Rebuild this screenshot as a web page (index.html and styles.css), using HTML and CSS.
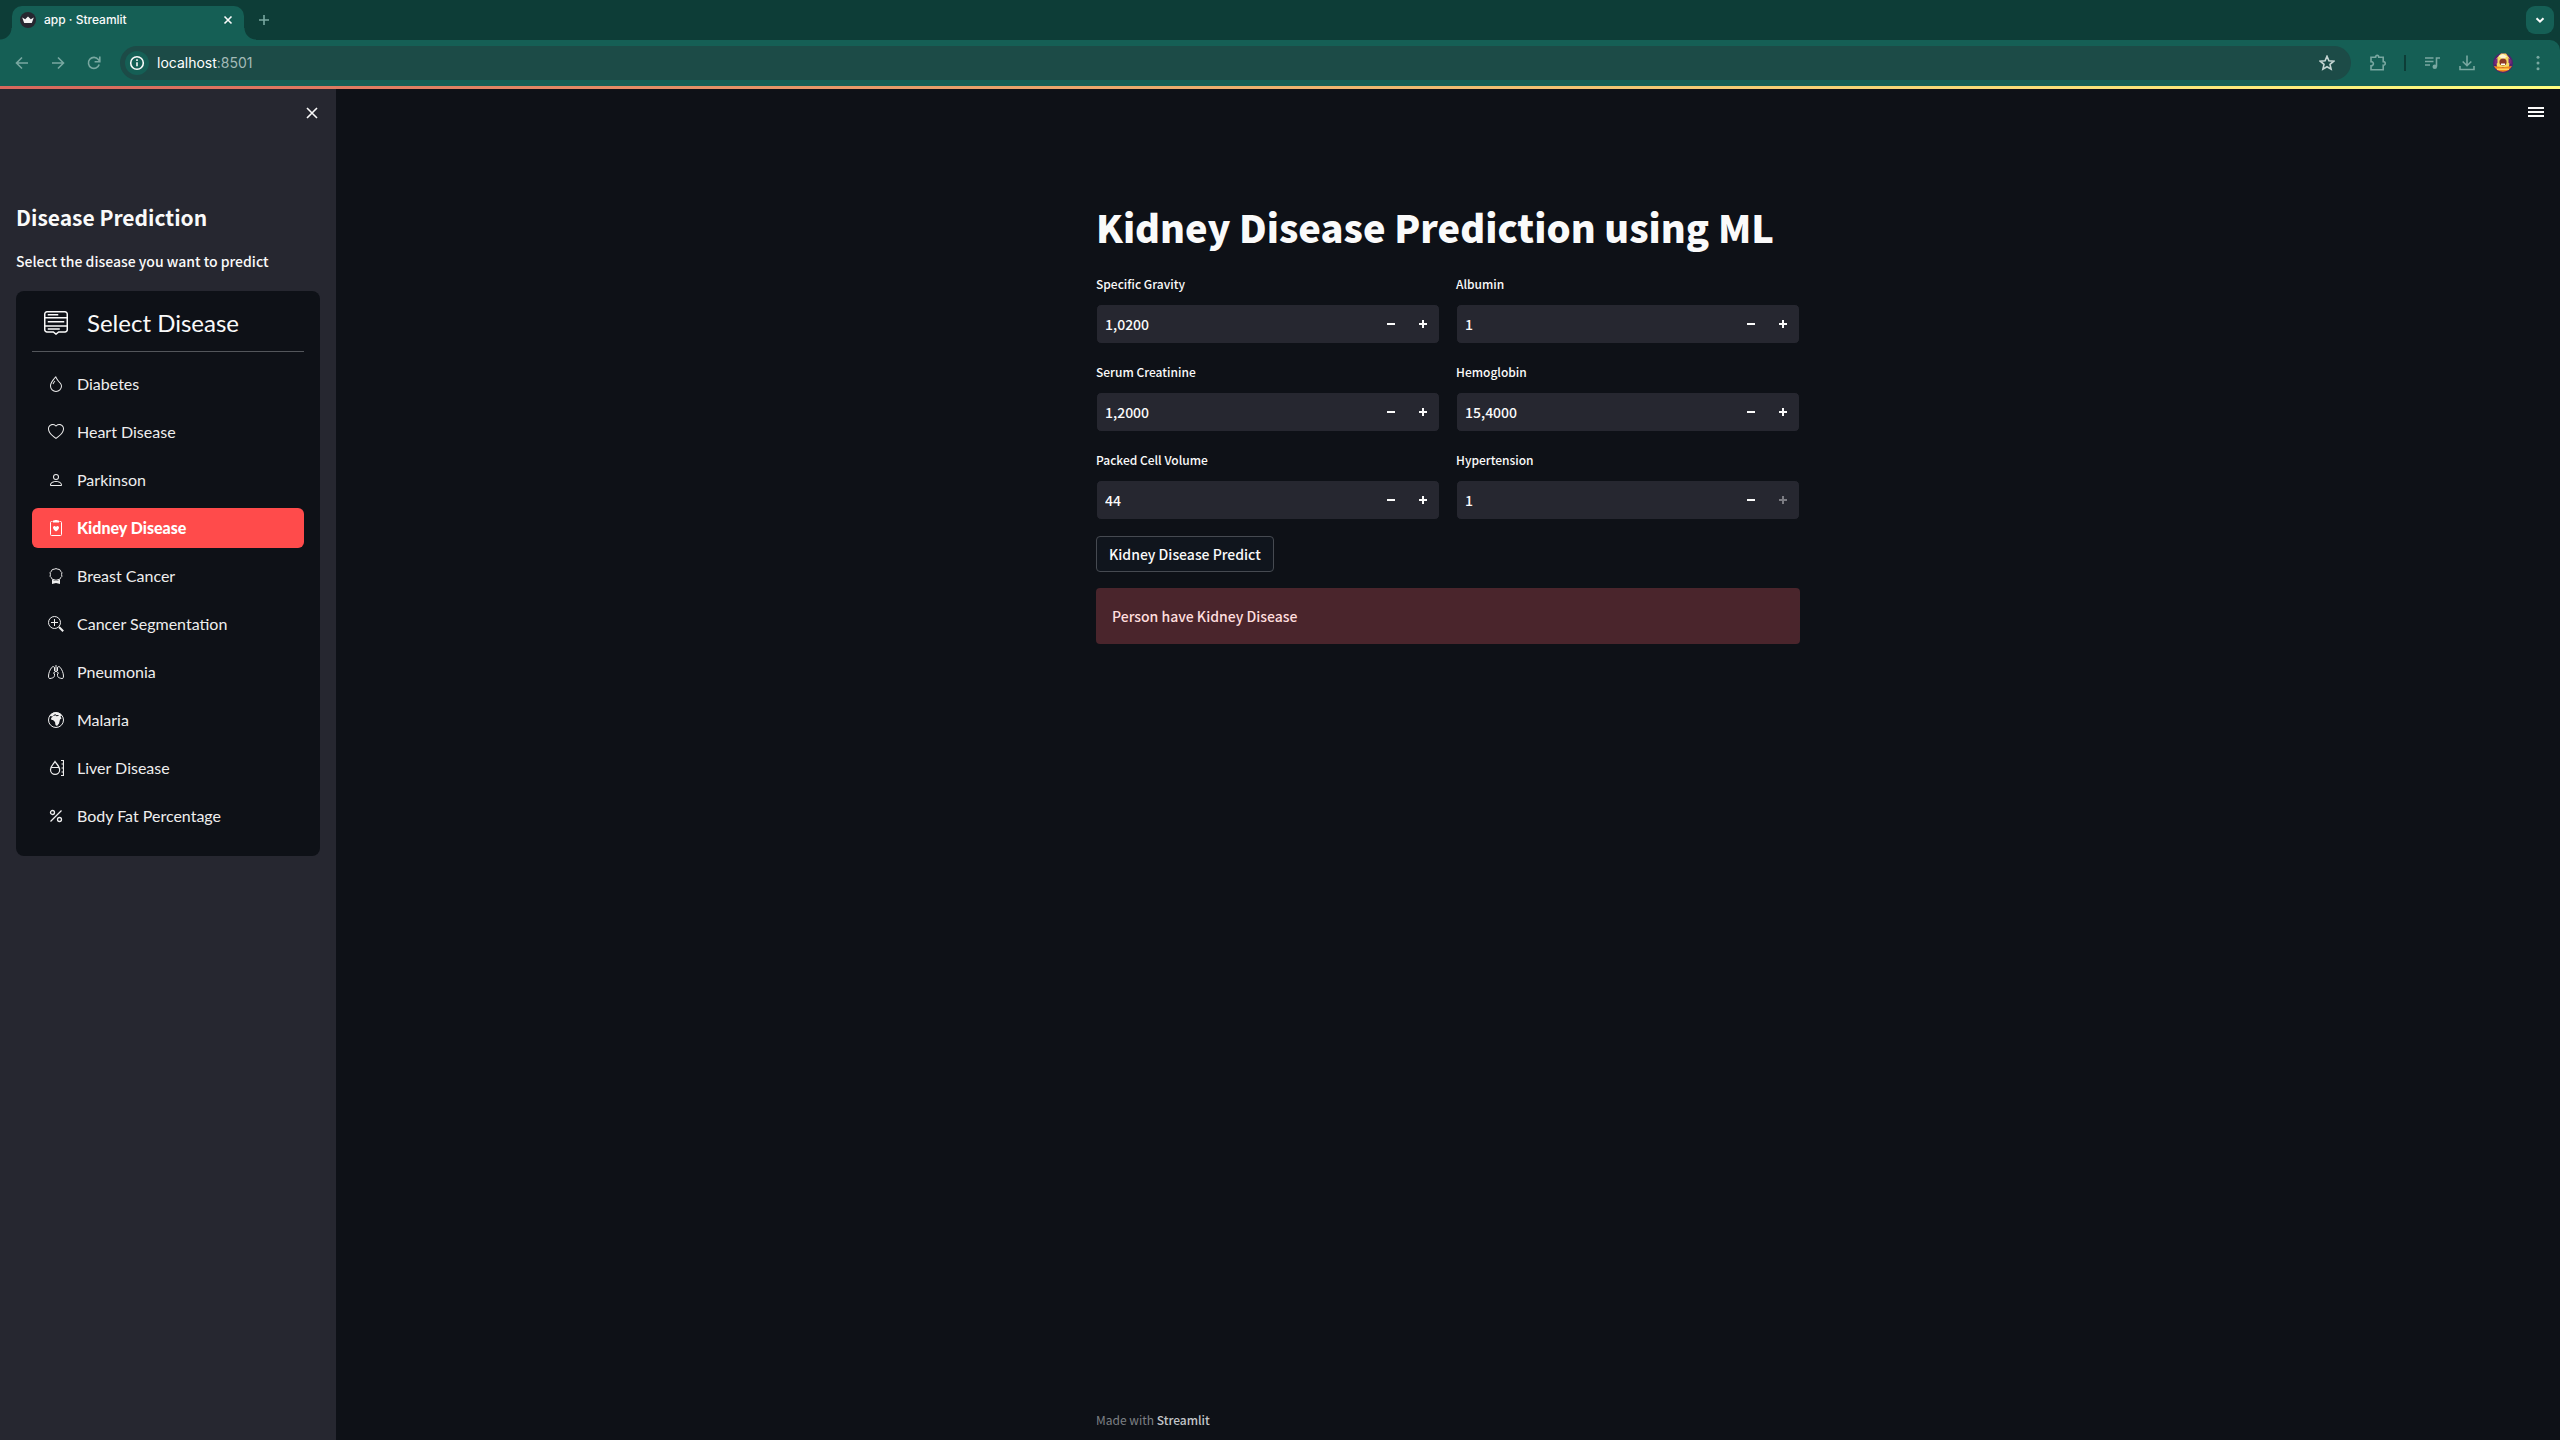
FILE: index.html
```html
<!DOCTYPE html>
<html lang="en">
<head>
<meta charset="utf-8">
<title>app · Streamlit</title>
<link rel="stylesheet" href="styles.css">
</head>
<body>
<header class="browser">
  <div class="tabstrip">
    <div class="tab">
      <svg class="favicon" viewBox="0 0 16 16"><circle cx="8" cy="8" r="8" fill="#262730"/><path d="M2.2 5.4l3 1.8L8 4.4l2.8 2.8 3-1.8-2 5.6H4.200z" fill="#f4f4f4"/></svg>
      <span class="tab-title">app · Streamlit</span>
      <button class="chrome-btn tab-close" aria-label="Close tab"><svg viewBox="0 0 16 16" class="i16"><path d="M4.500 4.500l7 7m0-7l-7 7" class="line"/></svg></button>
    </div>
    <button class="chrome-btn new-tab dim" aria-label="New tab"><svg viewBox="0 0 16 16" class="i16"><path d="M8 3v10M3 8h10" class="line"/></svg></button>
    <button class="chrome-btn tab-search" aria-label="Search tabs"><svg viewBox="0 0 16 16" class="i16"><path d="M4.500 6.200L8 9.700l3.500-3.500" class="line heavy"/></svg></button>
  </div>
  <div class="toolbar">
    <nav class="nav-buttons dim">
      <button class="chrome-btn" aria-label="Back"><svg viewBox="0 0 16 16" class="i16"><path d="M14 8H3M8 2.500L2.500 8 8 13.500" class="line"/></svg></button>
      <button class="chrome-btn" aria-label="Forward"><svg viewBox="0 0 16 16" class="i16"><path d="M2 8h11M8 2.500L13.500 8 8 13.500" class="line"/></svg></button>
      <button class="chrome-btn" aria-label="Reload"><svg viewBox="0 0 16 16" class="i16"><path d="M13.200 9.500A5.500 5.500 0 1 1 12.300 4.500L13.500 6" class="line"/><path d="M13.800 1.500v5.200H8.600" class="line"/></svg></button>
    </nav>
    <div class="omnibox">
      <button class="chrome-btn site-info" aria-label="Site information"><svg viewBox="0 0 16 16" class="i16"><circle cx="8" cy="8" r="6.300" class="line"/><path d="M8 7.200v4M8 4.300v1.600" class="line"/></svg></button>
      <div class="url" role="textbox" aria-label="Address" contenteditable="true" spellcheck="false"><span class="host">localhost</span>:8501</div>
      <button class="chrome-btn star" aria-label="Bookmark"><svg viewBox="0 0 16 16" class="i16"><path d="M8 1.300l1.900 4.500 4.800.4-3.700 3.200 1.100 4.800L8 11.700l-4.100 2.500L5 9.400 1.300 6.200l4.800-.4z" class="line"/></svg></button>
    </div>
    <div class="actions dim">
      <button class="chrome-btn" aria-label="Extensions"><svg viewBox="0 0 18 18" class="i18"><path d="M2 3.200h4.600C6.400.8 10 .8 9.800 3.200h4.400v4.400c2.700-.2 2.700 3.800 0 3.600v4.600H2v-4c3.200.1 3.200-4.200 0-4.200z" class="line"/></svg></button>
      <span class="divider"></span>
      <button class="chrome-btn" aria-label="Media"><svg viewBox="0 0 18 18" class="i18"><path d="M2 4h8.500M2 7.500h8.500M2 11h5M13.500 12.500V4H17" class="line"/><circle cx="11.800" cy="12.700" r="2.300" fill="currentColor"/></svg></button>
      <button class="chrome-btn" aria-label="Downloads"><svg viewBox="0 0 18 18" class="i18"><path d="M9 1.500v10M4.700 7.500L9 11.700l4.300-4.200M2 12v3.500h14V12" class="line"/></svg></button>
      <button class="chrome-btn" aria-label="Profile"><svg viewBox="0 0 20 20" class="i20"><circle cx="10" cy="10" r="10" fill="#51206f"/><path d="M3 6L8 .5h5L17 6l-1 8H4z" fill="#f7dc62"/><path d="M5.500 3l4.500-2 4 2.500-4 3z" fill="#fff4cf"/><circle cx="10" cy="9" r="3.600" fill="#8d3926"/><path d="M8 10.500h4v1.500H8z" fill="#fff"/><path d="M.9 13l9 1.300 9-1.300A10 10 0 0 1 .9 13z" fill="#f08a1d"/><path d="M4 15.500h12v1.500H4z" fill="#ffd45e"/><path d="M1.500 7l3-2v5l-3 2zM15.500 5l3 2v4l-3-1z" fill="#7a2a7a"/></svg></button>
      <button class="chrome-btn" aria-label="Menu"><svg viewBox="0 0 16 16" class="i16" fill="currentColor"><circle cx="8" cy="2.300" r="1.500"/><circle cx="8" cy="8" r="1.500"/><circle cx="8" cy="13.700" r="1.500"/></svg></button>
    </div>
  </div>
</header>
<div class="decoration"></div>
<div class="app">
  <aside class="sidebar">
    <button class="sidebar-close" aria-label="Close sidebar"><svg viewBox="0 0 16 16" class="i16"><path d="M3 3l10 10M13 3L3 13" class="line"/></svg></button>
    <h2 class="sidebar-title">Disease Prediction</h2>
    <p class="sidebar-text">Select the disease you want to predict</p>
    <div class="menu">
      <div class="menu-header">
        <svg viewBox="0 0 16 16" class="i24" fill="none" stroke="currentColor"><path d="M2 .5h12A1.500 1.500 0 0 1 15.500 2v10.500A1.500 1.500 0 0 1 14 14H9.800L8 15.400 6.200 14H2A1.500 1.500 0 0 1 .5 12.500V2A1.500 1.500 0 0 1 2 .5zM.5 4.500h15M.5 10h15M2.500 2.500h7M2.500 7.200h11M2.500 12h8"/></svg>
        <span>Select Disease</span>
      </div>
      <nav class="menu-list">
        <a class="item" href="#"><svg viewBox="0 0 16 16" class="i16" fill="currentColor"><path fill-rule="evenodd" d="M7.210.8C7.690.295 8 0 8 0c.109.363.234.708.371 1.038.812 1.946 2.073 3.350 3.197 4.600C12.878 7.096 14 8.345 14 10a6 6 0 0 1-12 0C2 6.668 5.580 2.517 7.210.8zm.413 1.021A31.250 31.250 0 0 0 5.794 3.990c-.726.95-1.436 2.008-1.960 3.070C3.304 8.133 3 9.138 3 10a5 5 0 0 0 10 0c0-1.201-.796-2.157-2.181-3.700l-.03-.032C9.750 5.110 8.500 3.720 7.623 1.820z"/><path d="M4.553 7.776c.82-1.641 1.717-2.753 2.093-3.130l.708.708c-.29.29-1.128 1.311-1.907 2.870z"/></svg>Diabetes</a>
        <a class="item" href="#"><svg viewBox="0 0 16 16" class="i16" fill="currentColor"><path d="m8 2.748-.717-.737C5.600.281 2.514.878 1.400 3.053c-.523 1.023-.641 2.500.314 4.385.92 1.815 2.834 3.989 6.286 6.357 3.452-2.368 5.365-4.542 6.286-6.357.955-1.886.838-3.362.314-4.385C13.486.878 10.400.28 8.717 2.010L8 2.748zM8 15C-7.333 4.868 3.279-3.040 7.824 1.143c.06.055.119.112.176.171a3.120 3.120 0 0 1 .176-.17C12.720-3.042 23.333 4.867 8 15z"/></svg>Heart Disease</a>
        <a class="item" href="#"><svg viewBox="0 0 16 16" class="i16" fill="currentColor"><path d="M8 8a3 3 0 1 0 0-6 3 3 0 0 0 0 6zm2-3a2 2 0 1 1-4 0 2 2 0 0 1 4 0zm4 8c0 1-1 1-1 1H3s-1 0-1-1 1-4 6-4 6 3 6 4zm-1-.004c-.001-.246-.154-.986-.832-1.664C11.516 10.680 10.289 10 8 10c-2.290 0-3.516.68-4.168 1.332-.678.678-.83 1.418-.832 1.664h10z"/></svg>Parkinson</a>
        <a class="item active" href="#" aria-current="page"><svg viewBox="0 0 16 16" class="i16"><path d="M4.500 1.500h-1a1 1 0 0 0-1 1v12a1 1 0 0 0 1 1h9a1 1 0 0 0 1-1v-12a1 1 0 0 0-1-1h-1" fill="none" stroke="currentColor"/><path d="M6.500 0h3v.5H11v2H5v-2h1.500zM8 6.900c1.300-1.600 3-.6 3 .9C11 9.300 9 10.800 8 11.500 7 10.800 5 9.300 5 7.800 5 6.300 6.700 5.300 8 6.900z" fill="currentColor"/></svg>Kidney Disease</a>
        <a class="item" href="#"><svg viewBox="0 0 16 16" class="i16" fill="none" stroke="currentColor"><path d="M6.200 1.200L8 .6l1.800.6 1.900.3.900 1.700 1.300 1.400-.3 1.900.3 1.900-1.300 1.300-.9 1.700-1.900.3L8 12.300l-1.800-.6-1.900-.3-.9-1.700-1.300-1.300.3-1.900-.3-1.900 1.300-1.400.9-1.700z"/><path d="M4 11.800V16l4-1 4 1v-4.200L8 13z" fill="currentColor" stroke="none"/></svg>Breast Cancer</a>
        <a class="item" href="#"><svg viewBox="0 0 16 16" class="i16" fill="none" stroke="currentColor"><circle cx="6.500" cy="6.500" r="6"/><path d="M6.500 3v7M3 6.500h7"/><path d="M11 11l4.200 4.200" stroke-width="2"/></svg>Cancer Segmentation</a>
        <a class="item" href="#"><svg viewBox="0 0 16 16" class="i16" fill="none" stroke="currentColor"><path d="M8 1v6.500M8 7L5 9.500M8 7l3 2.500M6.500 7V4c0-1.800-1.700-1.800-2.600-.7C2 5.500.6 9 .5 12c0 2.500.8 2.900 2.800 2.300 2.200-.6 3.200-1.300 3.200-3V9.500M9.500 7V4c0-1.800 1.700-1.800 2.600-.7 1.900 2.200 3.300 5.700 3.400 8.700 0 2.500-.8 2.900-2.800 2.300-2.200-.6-3.200-1.300-3.200-3V9.500"/></svg>Pneumonia</a>
        <a class="item" href="#"><svg viewBox="0 0 16 16" class="i16"><circle cx="8" cy="8" r="7.500" fill="none" stroke="currentColor"/><path d="M1.500 4C4-1 11-1 14 3.500L12.500 4l1 2.500-1.500 1-1 4-2 2.500-1.500-1-.5-3-2-2H3.500L3 6l2-1.500z" fill="currentColor"/><path d="M5.500 3.500l2-.8.5 1 2.500-.2" fill="none" stroke="#0e1117"/></svg>Malaria</a>
        <a class="item" href="#"><svg viewBox="0 0 16 16" class="i16" fill="none" stroke="currentColor"><path d="M7 1.500c-1.200 2.200-4.500 4.800-4.500 8.200a4.600 4.600 0 0 0 9.200 0C11.700 6.300 8.200 3.700 7 1.500zM3 7.500h8.400M13 .5h2.500v15H13M13.500 4h2M13.500 8h2M13.500 12h2" stroke-width="1.200"/></svg>Liver Disease</a>
        <a class="item" href="#"><svg viewBox="0 0 16 16" class="i16" fill="none" stroke="currentColor" stroke-width="1.300"><path d="M13.500 2.500l-11 11"/><circle cx="4.500" cy="4.500" r="2"/><circle cx="11.500" cy="11.500" r="2"/></svg>Body Fat Percentage</a>
      </nav>
    </div>
  </aside>
  <main class="main">
    <button class="main-menu" aria-label="Main menu"><svg viewBox="0 0 16 16" class="i16"><path d="M0 4h16M0 8h16M0 12h16" class="line heavy"/></svg></button>
    <form class="block" onsubmit="return false">
      <h1>Kidney Disease Prediction using ML</h1>
      <div class="fields">
        <div class="field"><label for="sg">Specific Gravity</label><div class="number"><input id="sg" type="text" inputmode="decimal" value="1,0200"><button type="button" class="minus" aria-label="Decrease"></button><button type="button" class="plus" aria-label="Increase"></button></div></div>
        <div class="field"><label for="al">Albumin</label><div class="number"><input id="al" type="text" inputmode="decimal" value="1"><button type="button" class="minus" aria-label="Decrease"></button><button type="button" class="plus" aria-label="Increase"></button></div></div>
        <div class="field"><label for="sc">Serum Creatinine</label><div class="number"><input id="sc" type="text" inputmode="decimal" value="1,2000"><button type="button" class="minus" aria-label="Decrease"></button><button type="button" class="plus" aria-label="Increase"></button></div></div>
        <div class="field"><label for="he">Hemoglobin</label><div class="number"><input id="he" type="text" inputmode="decimal" value="15,4000"><button type="button" class="minus" aria-label="Decrease"></button><button type="button" class="plus" aria-label="Increase"></button></div></div>
        <div class="field"><label for="pcv">Packed Cell Volume</label><div class="number"><input id="pcv" type="text" inputmode="decimal" value="44"><button type="button" class="minus" aria-label="Decrease"></button><button type="button" class="plus" aria-label="Increase"></button></div></div>
        <div class="field"><label for="ht">Hypertension</label><div class="number"><input id="ht" type="text" inputmode="decimal" value="1"><button type="button" class="minus" aria-label="Decrease"></button><button type="button" class="plus" aria-label="Increase" disabled></button></div></div>
      </div>
      <button class="predict" type="submit">Kidney Disease Predict</button>
      <div class="alert" role="alert">Person have Kidney Disease</div>
    </form>
    <footer class="footer">Made with <a href="#">Streamlit</a></footer>
  </main>
</div>
</body>
</html>
```
FILE: styles.css
```css
* { box-sizing: border-box; }
body {
  margin: 0;
  min-height: 100vh;
  display: flex;
  flex-direction: column;
  background: #0e1117;
  color: #fafafa;
  font-family: "Noto Sans CJK SC", sans-serif;
  font-size: 14px;
  font-weight: 500;
  line-height: 24px;
}
button, input { font: inherit; color: inherit; }
button { background: none; border: 0; padding: 0; cursor: pointer; }
a { color: inherit; text-decoration: none; }
svg { display: block; flex: none; }
.i16 { width: 16px; height: 16px; }
.i18 { width: 18px; height: 18px; }
.i20 { width: 20px; height: 20px; }
.i24 { width: 24px; height: 24px; }
.line { fill: none; stroke: currentColor; stroke-width: 1.6; }
.heavy { stroke-width: 2; }

/* Browser window */
.browser { background: #0d3d37; font-family: Inter, sans-serif; }
.tabstrip { display: flex; align-items: flex-end; height: 40px; padding: 0 6px 0 12px; }
.tab {
  position: relative;
  display: flex;
  align-items: center;
  width: 232px;
  height: 34px;
  padding: 0 8px 6px;
  border-radius: 10px 10px 0 0;
  background: #155f55;
  font-size: 12px;
}
.tab::before, .tab::after {
  content: "";
  position: absolute;
  bottom: 0;
  width: 12px;
  height: 12px;
}
.tab::before { left: -12px; background: radial-gradient(circle at 0 0, transparent 11px, #155f55 12px); }
.tab::after { right: -12px; background: radial-gradient(circle at 100% 0, transparent 11px, #155f55 12px); }
.favicon { width: 16px; height: 16px; }
.tab-title { margin-left: 8px; flex: 1; }
.chrome-btn { display: flex; align-items: center; justify-content: center; }
.new-tab { margin: 0 auto 12px 12px; }
.tab-search { width: 28px; height: 28px; margin-bottom: 6px; border-radius: 9px; background: #155f55; }
.dim { color: #79a8a1; }
.toolbar {
  display: flex;
  align-items: center;
  height: 46px;
  padding: 0 14px;
  background: #155f55;
  border-radius: 0 10px 0 0;
}
.nav-buttons { display: flex; gap: 20px; }
.omnibox {
  flex: 1;
  display: flex;
  align-items: center;
  height: 34px;
  margin: 0 18px;
  padding: 0 16px 0 5px;
  border-radius: 17px;
  background: #1c4b47;
}
.site-info { width: 24px; height: 24px; border-radius: 50%; background: #155f55; }
.url { flex: 1; margin-left: 8px; font-size: 14px; font-weight: 400; color: #a3bab7; outline: 0; }
.host { color: #fff; }
.star { color: #c5d5d3; }
.actions { display: flex; align-items: center; gap: 17px; }
.divider { width: 2px; height: 16px; background: #0d3d37; }
.decoration { height: 3px; background: linear-gradient(90deg, #d8675c, #fffd80); }

/* Sidebar */
.app { flex: 1; display: flex; }
.sidebar { width: 336px; flex: none; padding: 16px; background: #262730; }
.sidebar-close { display: block; margin-left: auto; }
.sidebar-title { margin: 80px 0 0; font-size: 21px; font-weight: 700; line-height: 32px; }
.sidebar-text { margin: 16px 0 18px; }
.menu {
  padding: 16px;
  border-radius: 8px;
  background: #0e1117;
  font-family: Lato, sans-serif;
  font-size: 16px;
  font-weight: 400;
}
.menu-header {
  display: flex;
  align-items: center;
  gap: 19px;
  height: 45px;
  padding: 0 12px 12px;
  border-bottom: 1px solid #53565b;
  font-size: 24px;
}
.menu-list { display: flex; flex-direction: column; gap: 8px; padding: 12px 0 4px; }
.item { display: flex; align-items: center; gap: 13px; height: 40px; padding: 0 16px; border-radius: 6px; color: #eeeeee; }
.item.active { background: #ff4b4b; color: #fff; font-weight: 900; }

/* Main area */
.main { flex: 1; display: flex; flex-direction: column; align-items: center; padding: 15px 16px 8px; }
.main-menu { align-self: flex-end; }
.block { width: 100%; max-width: 704px; margin-top: 75px; }
h1 { margin: 0; font-size: 38px; font-weight: 900; line-height: 64px; white-space: nowrap; }
.fields { display: grid; grid-template-columns: 1fr 1fr; gap: 16px; margin-top: 13px; }
.field { display: flex; flex-direction: column; justify-content: space-between; height: 72px; }
.field label { align-self: flex-start; font-size: 12px; }
.number {
  display: flex;
  height: 40px;
  border: 1px solid #0e1117;
  border-radius: 5px;
  background: #262730;
}
.number input { flex: 1; min-width: 0; padding: 0 8px; border: 0; outline: 0; background: none; }
.minus, .plus {
  width: 32px;
  background: linear-gradient(currentColor, currentColor) center / 8px 2px no-repeat;
}
.plus {
  background:
    linear-gradient(currentColor, currentColor) center / 8px 2px no-repeat,
    linear-gradient(currentColor, currentColor) center / 2px 8px no-repeat;
}
.plus:disabled { color: #7b7b82; }
.predict {
  display: block;
  height: 36px;
  margin-top: 16px;
  padding: 0 12px;
  border: 1px solid #464a51;
  border-radius: 4px;
  background: #10151d;
}
.alert { margin-top: 16px; padding: 16px; border-radius: 4px; background: #4a252c; color: #ffdede; }
.footer { width: 100%; max-width: 704px; margin-top: auto; font-size: 12px; font-weight: 400; color: #7d8085; }
.footer a { color: #c3c5c8; font-weight: 500; }
```
